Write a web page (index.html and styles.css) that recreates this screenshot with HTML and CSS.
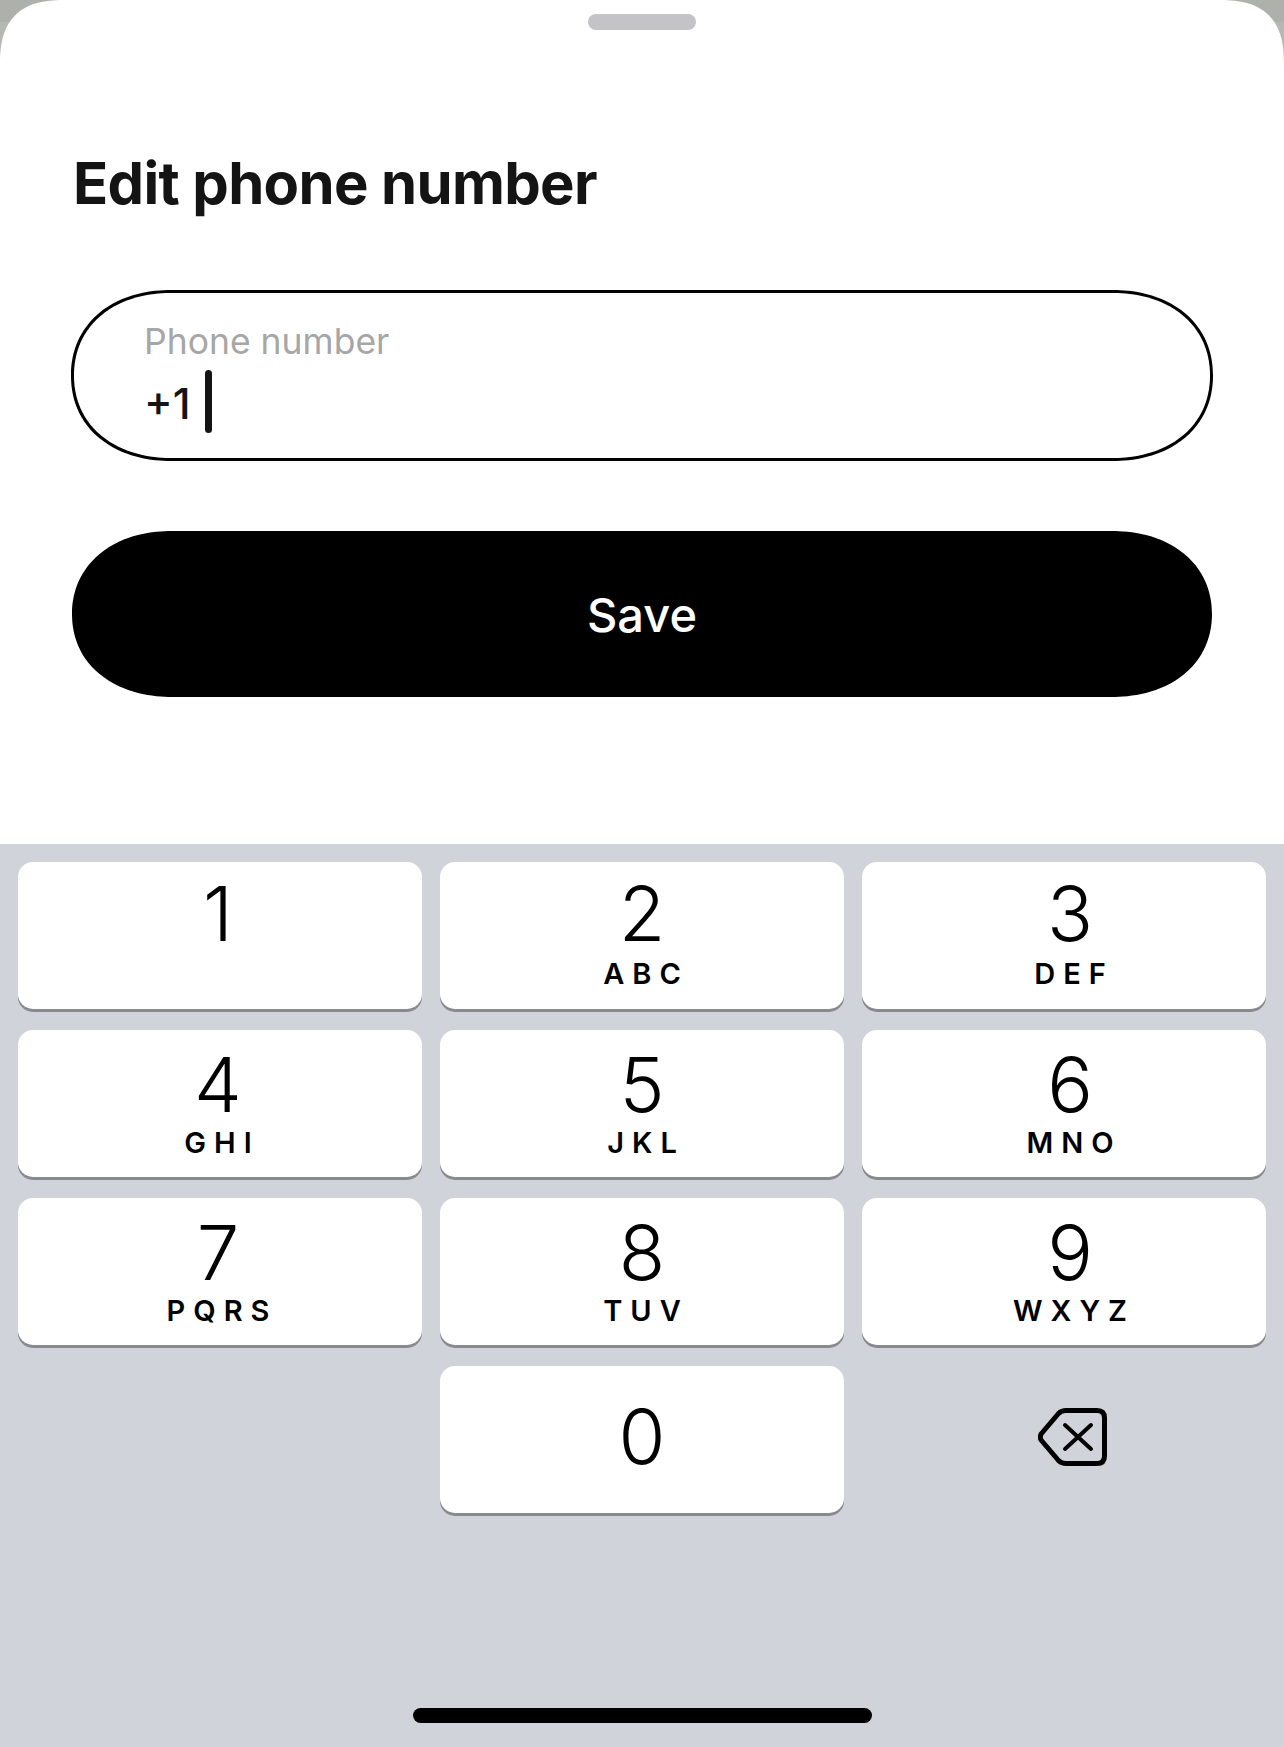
FILE: index.html
```html
<!DOCTYPE html>
<html lang="en">
<head>
    <meta charset="UTF-8">
    <meta name="viewport" content="width=device-width, initial-scale=1.0">
    <title>Edit phone number</title>
    <link rel="stylesheet" href="styles.css">
</head>
<body>
    <div class="screen">
        <div class="sheet">
            <div class="handle"></div>
            <h1 class="title">Edit phone number</h1>
            <div class="field">
                <div class="field-label">Phone number</div>
                <div class="field-value">+1<span class="caret"></span></div>
            </div>
            <button class="save">Save</button>
        </div>
        <div class="keyboard">
            <div class="keys">
                <div class="key"><span class="num">1</span></div>
                <div class="key"><span class="num">2</span><span class="letters">ABC</span></div>
                <div class="key"><span class="num">3</span><span class="letters">DEF</span></div>
                <div class="key key-low"><span class="num">4</span><span class="letters">GHI</span></div>
                <div class="key key-low"><span class="num">5</span><span class="letters">JKL</span></div>
                <div class="key key-low"><span class="num">6</span><span class="letters">MNO</span></div>
                <div class="key key-low"><span class="num">7</span><span class="letters">PQRS</span></div>
                <div class="key key-low"><span class="num">8</span><span class="letters">TUV</span></div>
                <div class="key key-low"><span class="num">9</span><span class="letters">WXYZ</span></div>
                <div class="key-empty"></div>
                <div class="key key-zero"><span class="num">0</span></div>
                <div class="key-delete">
                    <svg width="69" height="58" viewBox="0 0 69 58" fill="none" stroke="#000" stroke-linejoin="round" stroke-linecap="round">
                        <path stroke-width="5" d="M28 2.500H59Q66.500 2.500 66.500 10V48Q66.500 55.500 59 55.500H28Q23.500 55.500 20.500 52.500L3.500 32.500Q1 29 3.500 25.500L20.500 5.500Q23.500 2.500 28 2.500Z"/>
                        <path stroke-width="4" d="M27 17L53 41M53 17L27 41"/>
                    </svg>
                </div>
            </div>
            <div class="home-bar"></div>
        </div>
    </div>
</body>
</html>
```

FILE: styles.css
```css
* {
    box-sizing: border-box;
    margin: 0;
    padding: 0;
}
body {
    width: 1284px;
    height: 1747px;
    overflow: hidden;
    background: linear-gradient(#aeb0ab 22px, #b6b8b3 22px);
    font-family: Inter, "Liberation Sans", sans-serif;
}
.screen {
    display: flex;
    flex-direction: column;
    height: 100%;
}
.sheet {
    height: 844px;
    padding: 14px 72px 0;
    background-color: #fff;
    border-radius: 66px 66px 0 0;
    corner-shape: superellipse(1.4);
    display: flex;
    flex-direction: column;
}
.handle {
    align-self: center;
    width: 108px;
    height: 16px;
    border-radius: 8px;
    background-color: #c3c3c8;
}
.title {
    margin-top: 118px;
    margin-left: 1px;
    font-size: 58px;
    line-height: 70px;
    font-weight: 700;
    letter-spacing: -0.65px;
    color: #141414;
}
.field {
    margin: 72px -1px 0;
    height: 171px;
    padding: 27px 70px 0;
    border: 3px solid #000;
    border-radius: 100px / 85px;
    corner-shape: superellipse(1.1);
}
.field-label {
    font-size: 35.5px;
    line-height: 44px;
    color: #a6a6a6;
}
.field-value {
    display: flex;
    align-items: center;
    margin-top: 6px;
    font-size: 43px;
    font-weight: 500;
    line-height: 64px;
    color: #141414;
}
.caret {
    width: 7px;
    height: 63px;
    margin-left: 14px;
    margin-bottom: 2px;
    border-radius: 3.5px;
    background-color: #141414;
}
.save {
    margin-top: 70px;
    height: 166px;
    border: none;
    border-radius: 100px / 83px;
    corner-shape: superellipse(1.1);
    background-color: #000;
    color: #fff;
    font-family: inherit;
    font-size: 47px;
    font-weight: 500;
}
.keyboard {
    flex: 1;
    position: relative;
    padding: 18px 18px 0;
    background-color: #d0d4da;
}
.keys {
    display: grid;
    grid-template-columns: repeat(3, 404px);
    grid-auto-rows: 147px;
    gap: 21px 18px;
}
.key {
    display: flex;
    flex-direction: column;
    align-items: center;
    padding-top: 6px;
    border-radius: 15px;
    background-color: #fff;
    box-shadow: 0 3px 0 #898a8e;
    color: #000;
}
.key:nth-child(3n+1) {
    padding-right: 4px;
}
.key:nth-child(3n) {
    padding-left: 12px;
}
.key-low {
    padding-top: 9px;
}
.num {
    font-size: 76px;
    line-height: 90px;
    font-weight: 360;
}
.letters {
    padding-left: 8px;
    font-size: 29px;
    line-height: 34px;
    font-weight: 600;
    letter-spacing: 8px;
    margin-top: -1px;
}
.key-low .letters {
    margin-top: -3px;
}
.key-zero {
    justify-content: center;
    padding-top: 0;
    padding-bottom: 8px;
}
.key-delete {
    display: flex;
    align-items: center;
    justify-content: center;
    padding-left: 16px;
    padding-bottom: 5px;
}
.home-bar {
    position: absolute;
    left: 413px;
    bottom: 24px;
    width: 459px;
    height: 15px;
    border-radius: 8px;
    background-color: #000;
}
```
